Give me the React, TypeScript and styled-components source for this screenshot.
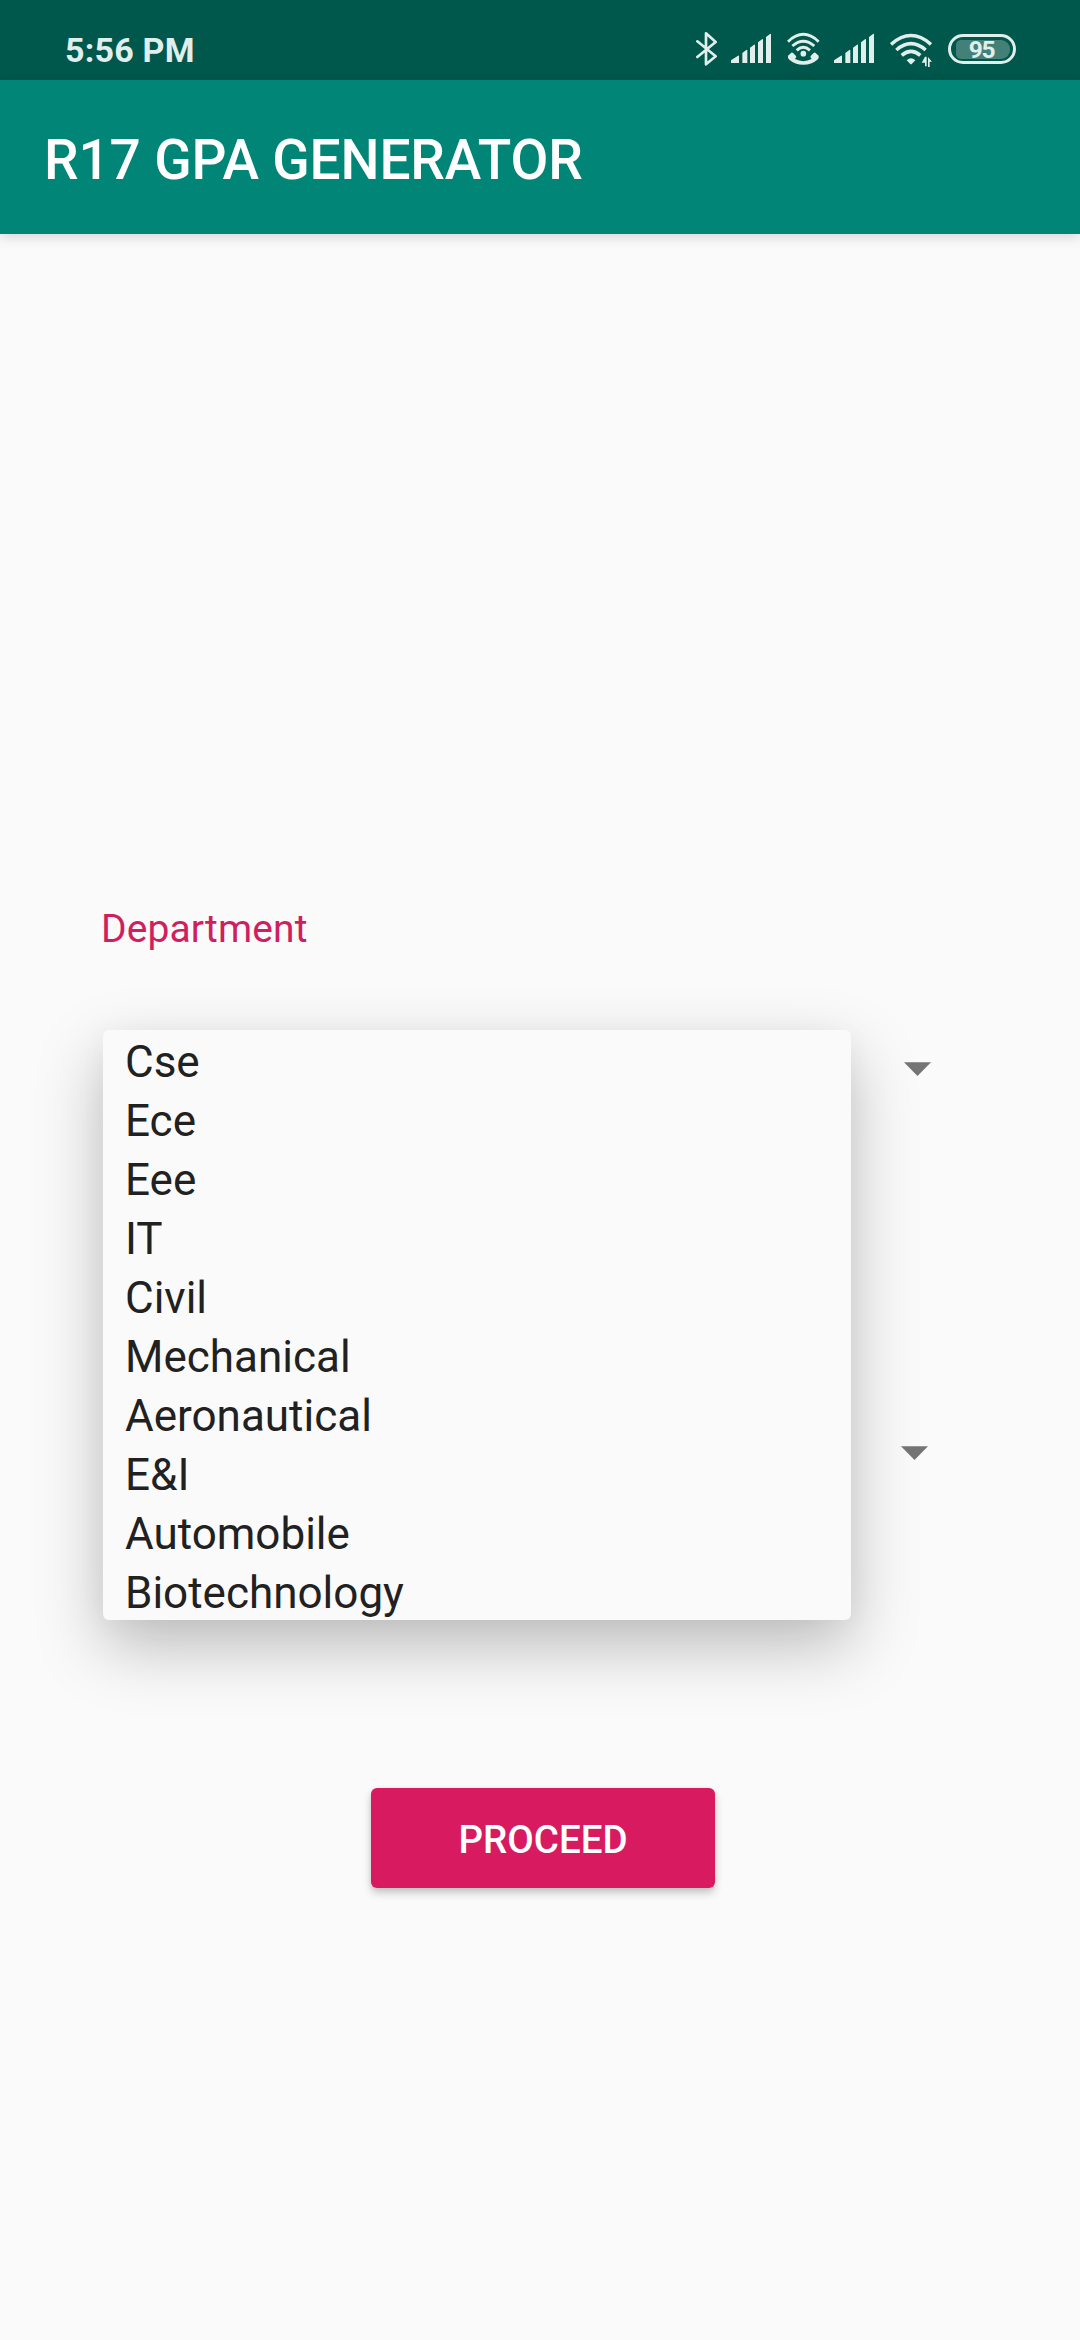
import React from "react";
import styled, { createGlobalStyle } from "styled-components";

const GlobalStyle = createGlobalStyle`
  * { box-sizing: border-box; }
  html, body { margin: 0; padding: 0; background: #fafafa; }
  body { font-family: Roboto, "Noto Sans", sans-serif; }
`;

const Screen = styled.div`
  width: 1080px;
  height: 2340px;
  display: flex;
  flex-direction: column;
  overflow: hidden;
  background: #fafafa;
`;

const StatusBar = styled.header`
  height: 80px;
  flex: none;
  display: flex;
  justify-content: space-between;
  padding: 30px 64px 0 65px;
  background: #00574b;
  color: #e0eeec;
`;

const Clock = styled.time`
  font-size: 34px;
  font-weight: 700;
  line-height: 40px;
  letter-spacing: 0.2px;
`;

const StatusIcons = styled.div`
  display: flex;
  height: 38px;
`;

const StatusIcon = styled.svg<{ $gap?: number }>`
  height: 38px;
  flex: none;
  margin-left: ${({ $gap = 0 }) => $gap}px;
  fill: currentColor;
`;

const Battery = styled.div`
  width: 68px;
  height: 30px;
  margin: 4px 0 0 16px;
  padding: 2.5px 3px 2.5px 5px;
  border: 3px solid currentColor;
  border-radius: 15px;
  display: flex;
`;

const BatteryLevel = styled.div`
  flex: 1;
  display: flex;
  align-items: center;
  justify-content: center;
  padding: 1px 3px 0 0;
  border-radius: 5px 9px 9px 5px;
  background: #438178;
  font-size: 24.5px;
  font-weight: 700;
  line-height: 18px;
  letter-spacing: -1.3px;
`;

const AppBar = styled.div`
  height: 154px;
  flex: none;
  display: flex;
  align-items: center;
  padding: 6px 44px 0 44px;
  background: #008577;
  box-shadow: 0 3px 12px rgba(0, 0, 0, 0.15);
`;

const Title = styled.h1`
  margin: 0;
  color: #fff;
  font-size: 55px;
  font-weight: 500;
  line-height: 64px;
  letter-spacing: -0.14px;
`;

const Form = styled.main`
  flex: 1;
  display: flex;
  flex-direction: column;
  padding: 672px 102px 0 101px;
`;

const Label = styled.label`
  height: 46px;
  color: #d01f5e;
  font-size: 39px;
  line-height: 46px;
  letter-spacing: 0.1px;
`;

const Spinner = styled.div<{ $top: number; $right: number }>`
  position: relative;
  height: 66px;
  margin-top: ${({ $top }) => $top}px;
  padding-right: ${({ $right }) => $right}px;
  display: flex;
  align-items: center;
  justify-content: flex-end;
`;

const Caret = styled.svg`
  width: 27px;
  height: 14px;
  fill: #757575;
`;

const Popup = styled.ul`
  position: absolute;
  z-index: 1;
  top: -6px;
  left: 2px;
  width: 748px;
  margin: 0;
  padding: 0;
  list-style: none;
  border-radius: 6px;
  background: #fafafa;
  box-shadow: 0 26px 66px rgba(0, 0, 0, 0.25), 0 4px 30px rgba(0, 0, 0, 0.03);
`;

const Option = styled.li`
  height: 59px;
  padding: 4px 22px 0;
  color: #212121;
  font-size: 44px;
  line-height: 57px;
`;

const ProceedButton = styled.button`
  width: 344px;
  height: 100px;
  margin: 302px 0 0 270px;
  padding: 3px 0 0;
  border: 0;
  border-radius: 6px;
  background: #d81b60;
  color: #fff;
  font: 500 38.5px/46px Roboto, "Noto Sans", sans-serif;
  box-shadow: 0 5px 8px rgba(0, 0, 0, 0.2), 0 1px 4px rgba(0, 0, 0, 0.08);
`;

const departments = [
  "Cse",
  "Ece",
  "Eee",
  "IT",
  "Civil",
  "Mechanical",
  "Aeronautical",
  "E&I",
  "Automobile",
  "Biotechnology",
];

const BluetoothIcon = () => (
  <StatusIcon width="22" viewBox="48 30 66 114">
    <path
      d="M52 64L107 109L78 133V40L107 66L52 111"
      fill="none"
      stroke="currentColor"
      strokeWidth="8"
      strokeLinejoin="round"
      strokeLinecap="round"
    />
  </StatusIcon>
);

const SignalIcon = ({ gap }: { gap: number }) => (
  <StatusIcon width="40" viewBox="153 30 120 114" $gap={gap}>
    <path d="M153 121L174 107Q177 105 177 108V129H153ZM187 99L199 90Q202 88 202 91V129H187ZM210 83L222 74Q225 72 225 75V129H210ZM234 67L246 58Q249 56 249 59V129H234ZM258 51L270 42Q273 40 273 43V129H258Z" />
  </StatusIcon>
);

const WifiCallIcon = () => (
  <StatusIcon width="33" viewBox="321 30 99 114" $gap={16}>
    <g fill="none" stroke="currentColor" strokeWidth="8.5">
      <path d="M324 65Q370 21 416 65" />
      <path d="M337 78Q370 49 403 78" />
      <path d="M350 91Q370 73 390 91" />
    </g>
    <circle cx="370" cy="101" r="8.5" />
    <path d="M324 107L334 98Q337 97 340 100L348 108Q350 111 347 114L345 117Q370 130 395 117L393 114Q390 111 392 108L400 100Q403 97 406 98L416 107Q418 113 412 119Q395 134 370 134Q345 134 328 119Q322 113 324 107Z" />
  </StatusIcon>
);

const WifiIcon = () => (
  <StatusIcon width="42" viewBox="90 30 126 114" $gap={16}>
    <g fill="none" stroke="currentColor" strokeWidth="10.5">
      <path d="M93 73Q153 20 213 73" />
      <path d="M109 90Q153 52 197 90" />
      <path d="M125 106Q153 82 181 106" />
    </g>
    <path d="M140 121Q153 109 166 121L156 131Q153 134 150 131Z" />
    <path d="M195 110H200V139H195V128H185ZM204 141V111L216 125H209V141Z" />
  </StatusIcon>
);

export default function App() {
  return (
    <>
      <GlobalStyle />
      <Screen>
        <StatusBar>
          <Clock>5:56 PM</Clock>
          <StatusIcons>
            <BluetoothIcon />
            <SignalIcon gap={13} />
            <WifiCallIcon />
            <SignalIcon gap={14} />
            <WifiIcon />
            <Battery>
              <BatteryLevel>95</BatteryLevel>
            </Battery>
          </StatusIcons>
        </StatusBar>
        <AppBar>
          <Title>R17 GPA GENERATOR</Title>
        </AppBar>
        <Form>
          <Label>Department</Label>
          <Spinner $top={84} $right={47}>
            <Popup role="listbox">
              {departments.map((name) => (
                <Option key={name} role="option">
                  {name}
                </Option>
              ))}
            </Popup>
            <Caret viewBox="0 0 27 14">
              <path d="M0 0.3H27L13.5 14Z" />
            </Caret>
          </Spinner>
          <Spinner $top={318} $right={50}>
            <Caret viewBox="0 0 27 14">
              <path d="M0 0.3H27L13.5 14Z" />
            </Caret>
          </Spinner>
          <ProceedButton>PROCEED</ProceedButton>
        </Form>
      </Screen>
    </>
  );
}
